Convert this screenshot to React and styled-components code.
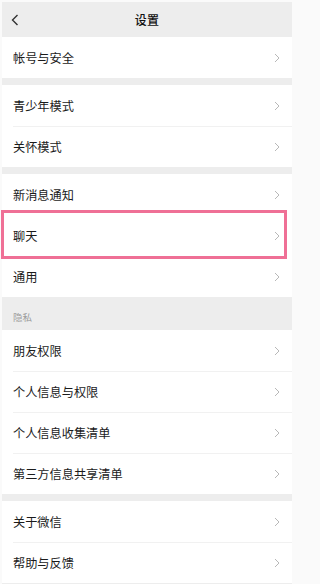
import styled, { createGlobalStyle } from "styled-components";

const GlobalStyle = createGlobalStyle`
  html, body {
    margin: 0;
    padding: 0;
    background: #fafafa;
  }
  body {
    font-family: "Noto Sans CJK SC", "Noto Sans", sans-serif;
  }
`;

const Screen = styled.div`
  width: 290px;
  height: 582px;
  margin: 2px 2px 0;
  background: #ededed;
`;

const Header = styled.div`
  position: relative;
  height: 35px;
  display: flex;
  align-items: center;
  justify-content: center;
  background: #ededed;
`;

const Back = styled.div`
  position: absolute;
  left: 9px;
  top: 12px;
  width: 10px;
  height: 12px;
  display: flex;
`;

const Title = styled.h1`
  margin: 0;
  font-size: 12px;
  font-weight: 500;
  color: #111;
  letter-spacing: 0.3px;
`;

const Group = styled.div`
  background: #fff;
  margin-top: ${(p) => p.$gap || 0}px;
`;

const Row = styled.div`
  position: relative;
  z-index: ${(p) => (p.$marked ? 2 : "auto")};
  height: 41px;
  display: flex;
  align-items: center;
  justify-content: space-between;
  padding: 0 12px 0 11px;
  background: #fff;

  & + &::before {
    content: "";
    position: absolute;
    top: 0;
    left: 11px;
    right: 0;
    height: 1px;
    background: #f1f1f1;
  }
`;

const Label = styled.span`
  font-size: 12.2px;
  color: #1b1b1b;
`;

const Section = styled.div`
  height: 33px;
  display: flex;
  align-items: flex-end;
  padding: 0 0 6px 11px;
  box-sizing: border-box;
  font-size: 9.5px;
  color: #9c9c9c;
`;

const Highlight = styled.div`
  position: absolute;
  top: -5px;
  bottom: -3px;
  left: -1px;
  right: 5px;
  border: 3.5px solid #ef7096;
  pointer-events: none;
`;

const Chevron = () => (
  <svg width="6" height="10" viewBox="0 0 6 10">
    <path d="M1 1 L5 5 L1 9" fill="none" stroke="#b8b8b8" strokeWidth="1" />
  </svg>
);

const Item = ({ label, marked }) => (
  <Row $marked={marked}>
    <Label>{label}</Label>
    <Chevron />
    {marked && <Highlight />}
  </Row>
);

const App = () => {
  return (
    <>
      <GlobalStyle />
      <Screen>
        <Header>
          <Back>
            <svg width="8" height="12" viewBox="0 0 8 12">
              <path
                d="M6.5 1 L1.5 6 L6.5 11"
                fill="none"
                stroke="#333"
                strokeWidth="1.4"
              />
            </svg>
          </Back>
          <Title>设置</Title>
        </Header>

        <Group>
          <Item label="帐号与安全" />
        </Group>

        <Group $gap={7}>
          <Item label="青少年模式" />
          <Item label="关怀模式" />
        </Group>

        <Group $gap={7}>
          <Item label="新消息通知" />
          <Item label="聊天" marked />
          <Item label="通用" />
        </Group>

        <Section>隐私</Section>

        <Group>
          <Item label="朋友权限" />
          <Item label="个人信息与权限" />
          <Item label="个人信息收集清单" />
          <Item label="第三方信息共享清单" />
        </Group>

        <Group $gap={7}>
          <Item label="关于微信" />
          <Item label="帮助与反馈" />
        </Group>
      </Screen>
    </>
  );
};

export default App;
